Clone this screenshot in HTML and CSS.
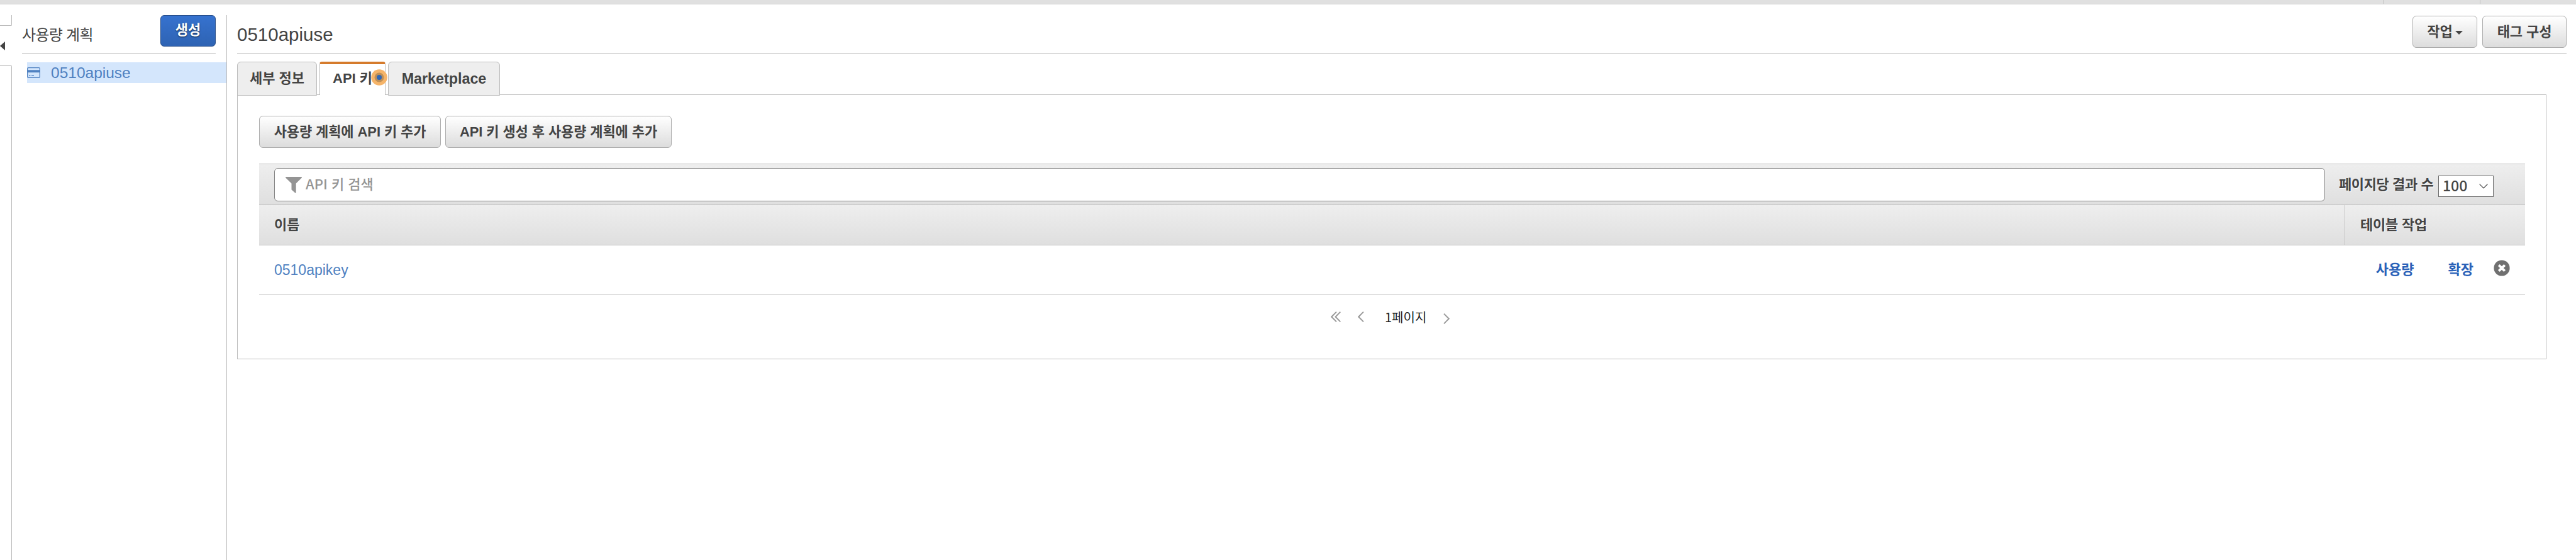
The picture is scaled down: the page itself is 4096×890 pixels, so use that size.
FILE: index.html
```html
<!DOCTYPE html>
<html lang="ko">
<head>
<meta charset="utf-8">
<title>사용량 계획</title>
<link rel="stylesheet" href="styles.css">
</head>
<body>
<div class="topbar"><span class="topbar-cell"></span></div>
<div class="layout">
  <div class="rail">
    <div class="rail-top"></div>
    <div class="rail-toggle"><svg width="8" height="14" viewBox="0 0 8 14"><path d="M8 0v14L0 7z" fill="#444"/></svg></div>
    <div class="rail-bottom"></div>
  </div>
  <aside class="sidebar">
    <div class="sidebar-head">
      <h2 class="sidebar-title">사용량 계획</h2>
      <button class="btn-primary">생성</button>
    </div>
    <a class="plan">
      <svg class="plan-icon" width="21" height="17" viewBox="0 0 21 17"><rect x=".7" y=".7" width="19.6" height="15.6" rx="1.4" fill="none" stroke="#4f81c1" stroke-width="1.3"/><path d="M0 4.3h21v3.9H0z" fill="#4f81c1"/><path d="M3 13.2h2.4M7 13.2h4" stroke="#4f81c1" stroke-width="1.3"/></svg>
      <span class="plan-name">0510apiuse</span>
    </a>
  </aside>
  <main class="main">
    <header class="main-head">
      <h1 class="main-title">0510apiuse</h1>
      <div class="head-actions">
        <button class="btn btn-menu">작업<svg class="caret" width="12" height="6" viewBox="0 0 12 6"><path d="M0 0h12L6 6z" fill="#444"/></svg></button>
        <button class="btn btn-tag">태그 구성</button>
      </div>
    </header>
    <nav class="tabs">
      <a class="tab tab-details">세부 정보</a>
      <a class="tab tab-active">API 키<span class="pointer"><svg width="26" height="26" viewBox="0 0 26 26"><circle cx="13" cy="13" r="12.8" fill="#f5b469"/><circle cx="13" cy="13" r="7.5" fill="#bd8f58"/><circle cx="13" cy="13" r="4" fill="#2e66b5"/></svg></span></a>
      <a class="tab tab-market">Marketplace</a>
    </nav>
    <section class="panel">
      <div class="panel-actions">
        <button class="btn btn-add">사용량 계획에 API 키 추가</button>
        <button class="btn btn-create">API 키 생성 후 사용량 계획에 추가</button>
      </div>
      <div class="filter">
        <div class="search">
          <svg class="funnel" width="26" height="26" viewBox="0 0 26 26"><path d="M.6 0h24.8q1 .8.2 1.800L16.700 10.500V25q-.3 1-1.200.7L9.500 20.500V10.500L.4 1.800Q-.4.8.6 0z" fill="#949494"/></svg>
          <span class="search-hint">API 키 검색</span>
        </div>
        <span class="per-page">페이지당 결과 수</span>
        <div class="select"><span class="select-value">100</span><svg width="14" height="8" viewBox="0 0 14 8"><path d="M.6.6L7 7 13.400.6" fill="none" stroke="#444" stroke-width="1.2"/></svg></div>
      </div>
      <div class="thead">
        <span class="th-name">이름</span>
        <span class="th-actions">테이블 작업</span>
      </div>
      <div class="row">
        <a class="key-name">0510apikey</a>
        <div class="row-actions">
          <a class="usage">사용량</a>
          <a class="extend">확장</a>
          <svg class="remove" width="26" height="26" viewBox="0 0 26 26"><circle cx="13" cy="13" r="12.600" fill="#707070"/><path d="M8.300 8.300l9.400 9.400M17.700 8.300l-9.400 9.400" stroke="#fff" stroke-width="4" stroke-linecap="butt"/></svg>
        </div>
      </div>
      <div class="pager">
        <svg class="first" width="16" height="17" viewBox="0 0 16 17"><path d="M9 .7L1.200 8.500 9 16.300M15.300.7L7.500 8.500l7.800 7.800" fill="none" stroke="#999" stroke-width="1.900"/></svg>
        <svg class="prev" width="10" height="17" viewBox="0 0 10 17"><path d="M9 .7L1.200 8.500 9 16.300" fill="none" stroke="#999" stroke-width="1.900"/></svg>
        <span class="page">1페이지</span>
        <svg class="next" width="10" height="17" viewBox="0 0 10 17"><path d="M1 .7l7.800 7.800L1 16.300" fill="none" stroke="#999" stroke-width="1.900"/></svg>
      </div>
    </section>
  </main>
</div>
</body>
</html>
```
FILE: styles.css
```css
* { box-sizing: border-box; }
html, body { margin: 0; height: 890px; overflow: hidden; }
body {
  background: #fff;
  color: #444;
  font: 22px/30px "Liberation Sans", "Noto Sans CJK KR", sans-serif;
  display: flex;
  flex-direction: column;
}
svg { display: block; flex: none; }
h1, h2 { margin: 0; font-weight: 400; white-space: nowrap; }
a, span, button { white-space: nowrap; }

.topbar {
  flex: none;
  height: 7px;
  background: #e0e0e0;
  border-bottom: 1px solid #d0d0d0;
  display: flex;
  justify-content: flex-end;
}
.topbar-cell { width: 155px; margin-right: 152px; border: solid #c4c4c4; border-width: 0 1px; }

.layout { flex: 1; display: flex; padding-top: 17px; }

.rail { width: 19px; display: flex; flex-direction: column; }
.rail-top { height: 17px; border: solid #bbb; border-width: 0 1px 1px 0; border-radius: 0 0 2px 0; }
.rail-toggle { height: 63px; padding-top: 25px; }
.rail-bottom { flex: 1; border: solid #bbb; border-width: 1px 1px 0 0; border-radius: 0 2px 0 0; }

.sidebar { width: 342px; padding-left: 16px; border-right: 1px solid #bbb; }
.sidebar-head {
  display: flex;
  justify-content: space-between;
  height: 62px;
  margin-right: 17px;
  border-bottom: 1px solid #bbb;
}
.sidebar-title { font-size: 24px; line-height: 30px; padding-top: 17px; letter-spacing: -.7px; }
.btn-primary {
  width: 88px;
  height: 50px;
  padding: 0 0 2px;
  border: 1px solid #254c88;
  border-radius: 6px;
  background: linear-gradient(#3672cf, #2e63b3);
  color: #fff;
  font: bold 22px/30px "Liberation Sans", "Noto Sans CJK KR", sans-serif;
  text-shadow: 0 1px 2px rgba(0, 0, 0, .7);
}
.plan {
  display: flex;
  align-items: center;
  height: 33px;
  margin: 13px 0 0 8px;
  background: #d4e6fc;
  color: #4f81c1;
  font-size: 24.5px;
}
.plan-name { margin-left: 17px; }

.main { width: 3704px; margin-left: 16px; }
.main-head { display: flex; justify-content: space-between; height: 62px; border-bottom: 1px solid #bbb; }
.main-title { font-size: 29.5px; line-height: 36px; padding-top: 13px; }
.head-actions { display: flex; gap: 8px; padding-top: 1px; }
.btn {
  height: 51px;
  padding: 0;
  border: 1px solid #acacac;
  border-radius: 6px;
  background: linear-gradient(#fff, #dcdcdc);
  color: #444;
  font: bold 22px/30px "Liberation Sans", "Noto Sans CJK KR", sans-serif;
  letter-spacing: -.1px;
  display: flex;
  align-items: center;
  justify-content: center;
}
.btn-menu { width: 103px; }
.btn-tag { width: 134px; }
.btn-add { width: 289px; }
.btn-create { width: 360px; }
.caret { margin: 3px 0 0 4px; }

.tabs { display: flex; gap: 4px; height: 54px; margin: 12px 0 -2px; position: relative; z-index: 1; }
.tab {
  display: flex;
  align-items: center;
  justify-content: center;
  border: 1px solid #bbb;
  border-radius: 6px 6px 0 0;
  background: #eee;
  font-weight: 700;
}
.tab-details { width: 127px; }
.tab-active {
  position: relative;
  width: 105px;
  height: 53px;
  justify-content: flex-start;
  padding: 0 0 3px 20px;
  border-top: 4px solid #d57b2c;
  border-bottom: 0;
  border-radius: 4px 4px 0 0;
  background: #fff;
}
.pointer { position: absolute; left: 81px; top: 8px; }
.tab-market { width: 178px; font-size: 23.3px; }

.panel { width: 3672px; height: 421px; border: 1px solid #bbb; padding: 33px 33px 0 34px; }
.panel-actions { display: flex; gap: 7px; }
.filter {
  display: flex;
  height: 66px;
  margin-top: 25px;
  padding: 6px 0 0 24px;
  border: solid #c0c0c0;
  border-width: 1px 0;
  background: linear-gradient(#eee, #dfdfdf);
}
.search {
  display: flex;
  align-items: center;
  width: 3261px;
  height: 53px;
  padding-left: 17px;
  border: 1px solid #858585;
  border-radius: 6px;
  background: #fff;
}
.search-hint { margin: -5px 0 0 6px; color: #949494; font: 500 22px/30px "Noto Sans CJK KR", sans-serif; }
.per-page { margin: 12px 0 0 22px; width: 152px; font-weight: 700; letter-spacing: -.4px; text-shadow: 1px 1px 1px #fff; }
.select {
  display: flex;
  align-items: center;
  justify-content: space-between;
  width: 88px;
  height: 34px;
  margin: 12px 0 0 6px;
  padding: 0 8px 0 6px;
  border: 1px solid #686868;
  background: #fff;
  font: 500 23px/30px "Noto Sans CJK KR", sans-serif;
}
.select-value { margin-top: -5px; }
.thead {
  display: flex;
  align-items: center;
  height: 64px;
  padding-left: 24px;
  border-bottom: 1px solid #c0c0c0;
  background: linear-gradient(#eee, #dfdfdf);
  font-weight: 700;
  text-shadow: 1px 1px 1px #fff;
}
.th-name { flex: 1; }
.th-actions { width: 287px; height: 63px; padding: 17px 0 0 24px; border-left: 1px solid #c0c0c0; letter-spacing: -.2px; }
.row {
  display: flex;
  align-items: center;
  justify-content: space-between;
  height: 78px;
  padding: 0 24px 0 24px;
  border-bottom: 1px solid #bbb;
}
.key-name { color: #4f81c1; font-size: 23px; }
.row-actions { display: flex; align-items: center; color: #2a62b8; font-weight: 700; }
.extend { margin-left: 54px; }
.remove { margin: -6px 0 0 32px; }
.pager { display: flex; align-items: center; height: 30px; margin-top: 20px; padding-left: 1704px; color: #222; }
.prev { margin-left: 27px; }
.page { margin: 2px 0 0 33px; font: 400 20px/30px "Noto Sans CJK KR", sans-serif; }
.next { margin: 7px 0 0 27px; }
```
